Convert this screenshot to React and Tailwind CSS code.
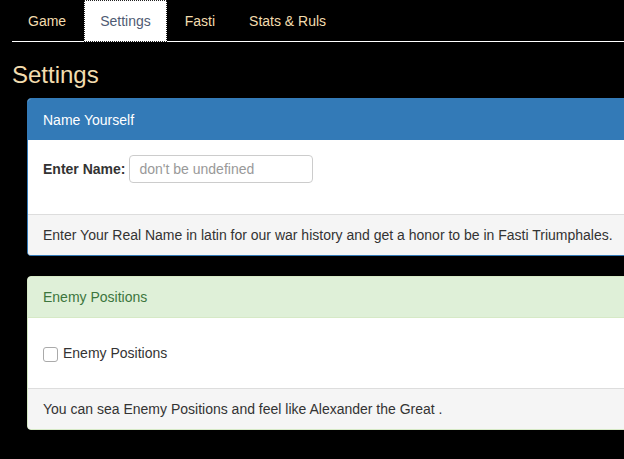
export default function App() {
  const tabs = ["Game", "Settings", "Fasti", "Stats & Ruls"];
  return (
    <div
      className="w-[624px] h-[459px] bg-black overflow-hidden text-[14px] leading-[20px] text-[#333]"
      style={{ fontFamily: '"Liberation Sans", Arial, sans-serif' }}
    >
      <div className="pl-[12px]">
        <ul className="flex border-b border-white">
          {tabs.map((t) => (
            <li key={t} className="mr-[2px] -mb-px">
              {t === "Settings" ? (
                <div className="block px-[15px] py-[10px] bg-white border border-dotted border-[#222] text-[#4f5b73]">
                  {t}
                </div>
              ) : (
                <div className="block px-[15px] py-[10px] border border-transparent text-[#f2dcae]">
                  {t}
                </div>
              )}
            </li>
          ))}
        </ul>
        <h3 className="mt-[20px] mb-[10px] text-[24px] leading-[26px] text-[#f2dcae]">Settings</h3>
        <div className="pl-[15px]">
          <div className="w-[640px] mb-[20px] border border-[#337ab7] rounded-[4px] bg-white overflow-hidden">
            <div className="h-[41px] px-[15px] flex items-center bg-[#337ab7] text-white text-[14px]">
              Name Yourself
            </div>
            <div className="h-[74px] px-[15px] pt-[15px] flex items-start">
              <div className="flex items-center h-[28px]">
                <label className="font-bold mr-[4px]">Enter Name:</label>
                <div className="w-[184px] h-[28px] border border-[#ccc] rounded-[4px] px-[9px] flex items-center text-[#999]">
                  don't be undefined
                </div>
              </div>
            </div>
            <div className="h-[41px] px-[15px] flex items-center bg-[#f5f5f5] border-t border-[#ddd]">
              Enter Your Real Name in latin for our war history and get a honor to be in Fasti Triumphales.
            </div>
          </div>
          <div className="w-[640px] border border-[#d6e9c6] rounded-[4px] bg-white overflow-hidden">
            <div className="h-[41px] px-[15px] flex items-center bg-[#dff0d8] text-[#3c763d] border-b border-[#d6e9c6] text-[14px]">
              Enemy Positions
            </div>
            <div className="h-[70px] px-[15px] flex items-center">
              <span className="w-[15px] h-[15px] border border-[#aaa] rounded-[3px] mr-[5px] mt-[3px] bg-white inline-block"></span>
              <span>Enemy Positions</span>
            </div>
            <div className="h-[41px] px-[15px] flex items-center bg-[#f5f5f5] border-t border-[#ddd]">
              You can sea Enemy Positions and feel like Alexander the Great .
            </div>
          </div>
        </div>
      </div>
    </div>
  );
}
